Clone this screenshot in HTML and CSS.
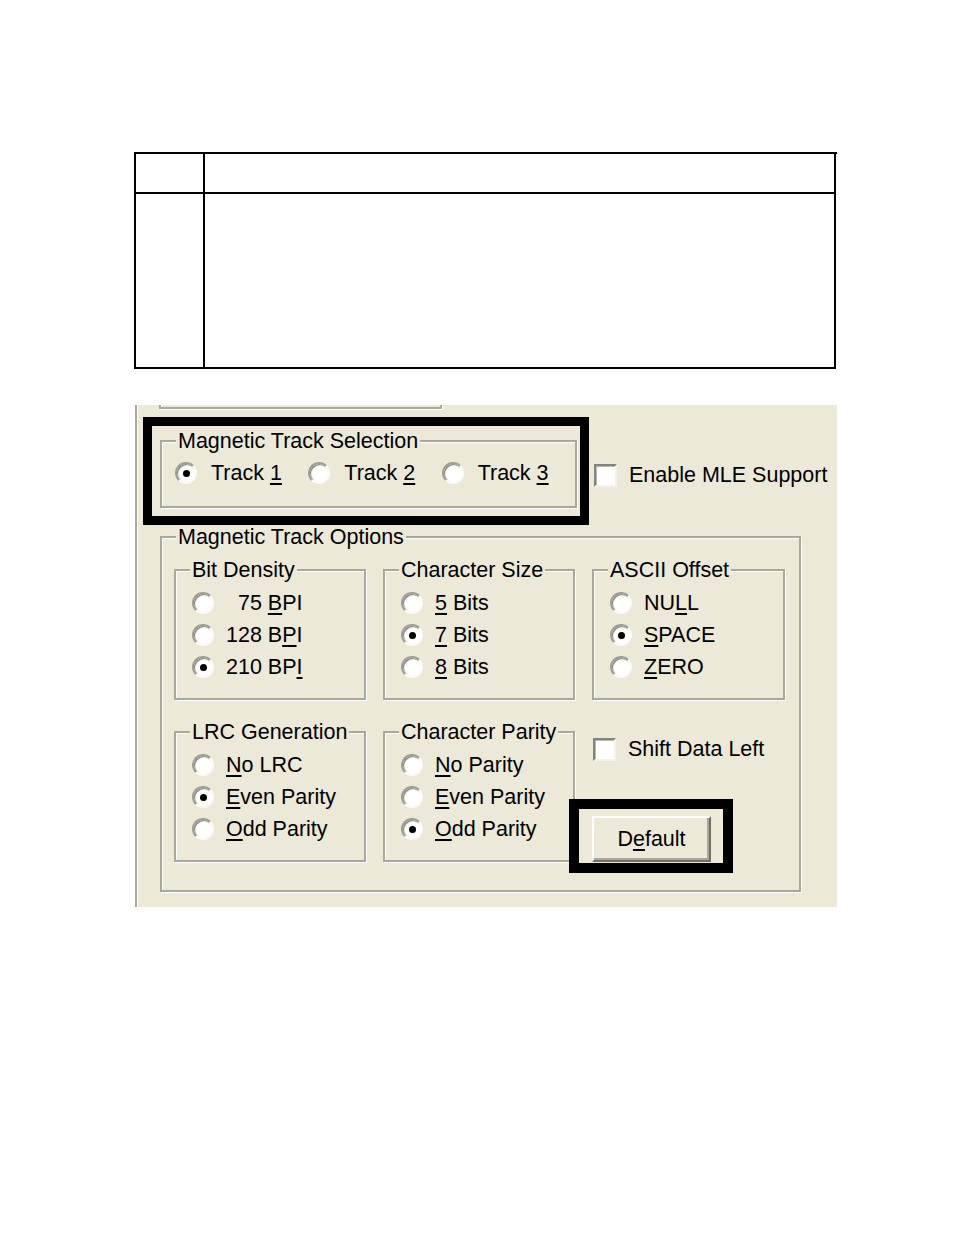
FILE: index.html
```html
<!DOCTYPE html>
<html>
<head>
<meta charset="utf-8">
<title>Magnetic Track Options</title>
<link rel="stylesheet" href="styles.css">
</head>
<body>
<div class="page">
  <div class="doc-table">
    <div class="cell"></div><div class="cell"></div>
    <div class="cell"></div><div class="cell"></div>
  </div>

  <div class="dialog">
    <div class="prev-group"></div>

    <div class="row-top">
      <div class="hl hl-track">
        <fieldset class="grp grp-track">
          <legend>Magnetic Track Selection</legend>
          <div class="track-row">
            <label class="opt opt-track"><span class="radio on"></span>Track <u>1</u></label>
            <label class="opt opt-track"><span class="radio"></span>Track <u>2</u></label>
            <label class="opt opt-track"><span class="radio"></span>Track <u>3</u></label>
          </div>
        </fieldset>
      </div>
      <label class="chk-opt chk-mle"><span class="check"></span>Enable MLE Support</label>
    </div>

    <fieldset class="grp grp-options">
      <legend>Magnetic Track Options</legend>
      <div class="sub-grid">
        <fieldset class="grp sub">
          <legend>Bit Density</legend>
          <div class="sub-body">
            <label class="opt"><span class="radio"></span>&nbsp;&nbsp;75 <u>B</u>PI</label>
            <label class="opt"><span class="radio"></span>128 B<u>P</u>I</label>
            <label class="opt"><span class="radio on"></span>210 BP<u>I</u></label>
          </div>
        </fieldset>
        <fieldset class="grp sub">
          <legend>Character Size</legend>
          <div class="sub-body">
            <label class="opt"><span class="radio"></span><u>5</u> Bits</label>
            <label class="opt"><span class="radio on"></span><u>7</u> Bits</label>
            <label class="opt"><span class="radio"></span><u>8</u> Bits</label>
          </div>
        </fieldset>
        <fieldset class="grp sub">
          <legend>ASCII Offset</legend>
          <div class="sub-body">
            <label class="opt"><span class="radio"></span>NU<u>L</u>L</label>
            <label class="opt"><span class="radio on"></span><u>S</u>PACE</label>
            <label class="opt"><span class="radio"></span><u>Z</u>ERO</label>
          </div>
        </fieldset>
        <fieldset class="grp sub">
          <legend>LRC Generation</legend>
          <div class="sub-body">
            <label class="opt"><span class="radio"></span><u>N</u>o LRC</label>
            <label class="opt"><span class="radio on"></span><u>E</u>ven Parity</label>
            <label class="opt"><span class="radio"></span><u>O</u>dd Parity</label>
          </div>
        </fieldset>
        <fieldset class="grp sub">
          <legend>Character Parity</legend>
          <div class="sub-body">
            <label class="opt"><span class="radio"></span><u>N</u>o Parity</label>
            <label class="opt"><span class="radio"></span><u>E</u>ven Parity</label>
            <label class="opt"><span class="radio on"></span><u>O</u>dd Parity</label>
          </div>
        </fieldset>
        <div class="cell-extra">
          <label class="chk-opt chk-shift"><span class="check"></span>Shift Data Left</label>
          <div class="hl hl-default">
            <button class="btn" type="button">D<u>e</u>fault</button>
          </div>
        </div>
      </div>
    </fieldset>
  </div>
</div>
</body>
</html>
```

FILE: styles.css
```css
html, body {
  margin: 0;
  padding: 0;
  background: #ffffff;
}

.page {
  padding: 152px 0 0 134px;
  font-family: "Liberation Sans", Arial, sans-serif;
  font-size: 21.5px;
  color: #000;
}

/* document table */
.doc-table {
  display: grid;
  grid-template-columns: 69px 631px;
  grid-template-rows: 40px 175px;
  width: 703px;
  box-sizing: border-box;
  border-top: 2px solid #000;
  border-left: 2px solid #000;
}
.doc-table .cell {
  border-right: 2px solid #000;
  border-bottom: 2px solid #000;
}

/* dialog capture */
.dialog {
  margin: 36px 0 0 1px;
  width: 702px;
  height: 502px;
  box-sizing: border-box;
  background: #ECE9D8;
  border-left: 2px solid #ACA899;
  box-shadow: inset 1px 0 0 #ffffff;
  overflow: hidden;
}

.prev-group {
  margin-left: 22px;
  width: 283px;
  height: 4px;
  box-sizing: border-box;
  border: 2px solid #ACA899;
  border-top: 0;
  box-shadow: 1px 1px 0 #ffffff, inset 1px 0 0 #ffffff;
}

.row-top {
  display: flex;
  align-items: flex-start;
  margin-top: 8px;
}

.hl {
  border: 9px solid #000;
  box-sizing: border-box;
}

.hl-track {
  margin-left: 6px;
  width: 446px;
  height: 108px;
}

fieldset.grp {
  margin: 0;
  padding: 0;
  min-width: 0;
  border: 2px solid #ACA899;
  box-shadow: inset 1px 1px 0 #ffffff, 1px 1px 0 #ffffff;
}

fieldset.grp > legend {
  margin-left: 14px;
  padding: 0 2px;
  line-height: 24px;
  background: #ECE9D8;
  white-space: nowrap;
}

.grp-track {
  margin: 3px 3px 0 8px !important;
  padding: 4px 0 17px 0 !important;
}

.track-row {
  display: flex;
  padding-left: 13px;
}

.opt {
  display: flex;
  align-items: center;
  height: 32px;
  white-space: pre;
}

.opt-track {
  width: 135px;
}

.opt .radio {
  margin-right: 12px;
}
.opt-track .radio {
  margin-right: 14px;
}

u {
  text-decoration-thickness: 1.5px;
  text-underline-offset: 3px;
}

.radio {
  flex: none;
  position: relative;
  width: 22px;
  height: 22px;
  box-sizing: border-box;
  border-radius: 50%;
  background: #ffffff;
  border: 2px solid;
  border-color: #A09E90 #FBFBF8 #FBFBF8 #A09E90;
  box-shadow: inset 1px 1px 1px #7E7C72;
}
.radio.on::after {
  content: "";
  position: absolute;
  left: 50%;
  top: 50%;
  width: 7px;
  height: 7px;
  margin: -3.5px 0 0 -3.5px;
  border-radius: 50%;
  background: #000;
}

.chk-opt {
  display: flex;
  align-items: center;
  height: 32px;
  white-space: nowrap;
}

.check {
  flex: none;
  width: 23px;
  height: 23px;
  box-sizing: border-box;
  background: #ffffff;
  border: 2px solid;
  border-color: #85837A #F3F2EC #F3F2EC #85837A;
  box-shadow: inset 1px 1px 0 #B8B6AA;
  margin-right: 12px;
}

.chk-mle {
  margin: 42px 0 0 5px;
}

.grp-options {
  margin-left: 23px !important;
  width: 641px;
  box-sizing: border-box;
  padding: 9px 0 28px 0 !important;
}

.sub-grid {
  display: grid;
  grid-template-columns: 192px 192px 193px;
  column-gap: 17px;
  row-gap: 20px;
  padding-left: 12px;
}

.sub {
  padding: 5px 0 15px 0 !important;
}

.sub-body {
  padding-left: 16px;
}

.cell-extra {
  display: flex;
  flex-direction: column;
  align-items: flex-start;
}

.chk-shift {
  margin: 13px 0 0 1px;
}

.hl-default {
  margin: 34px 0 -11px -23px;
  width: 164px;
  border-width: 10px;
  padding: 7px 12px 1px 13px;
}

.btn {
  display: block;
  width: 119px;
  height: 46px;
  box-sizing: border-box;
  margin: 0;
  padding: 0;
  font: inherit;
  color: #000;
  background: #ECE9D8;
  border: 2px solid;
  border-color: #ffffff #716F64 #716F64 #ffffff;
  box-shadow: inset -2px -2px 0 #ACA899;
}
```
